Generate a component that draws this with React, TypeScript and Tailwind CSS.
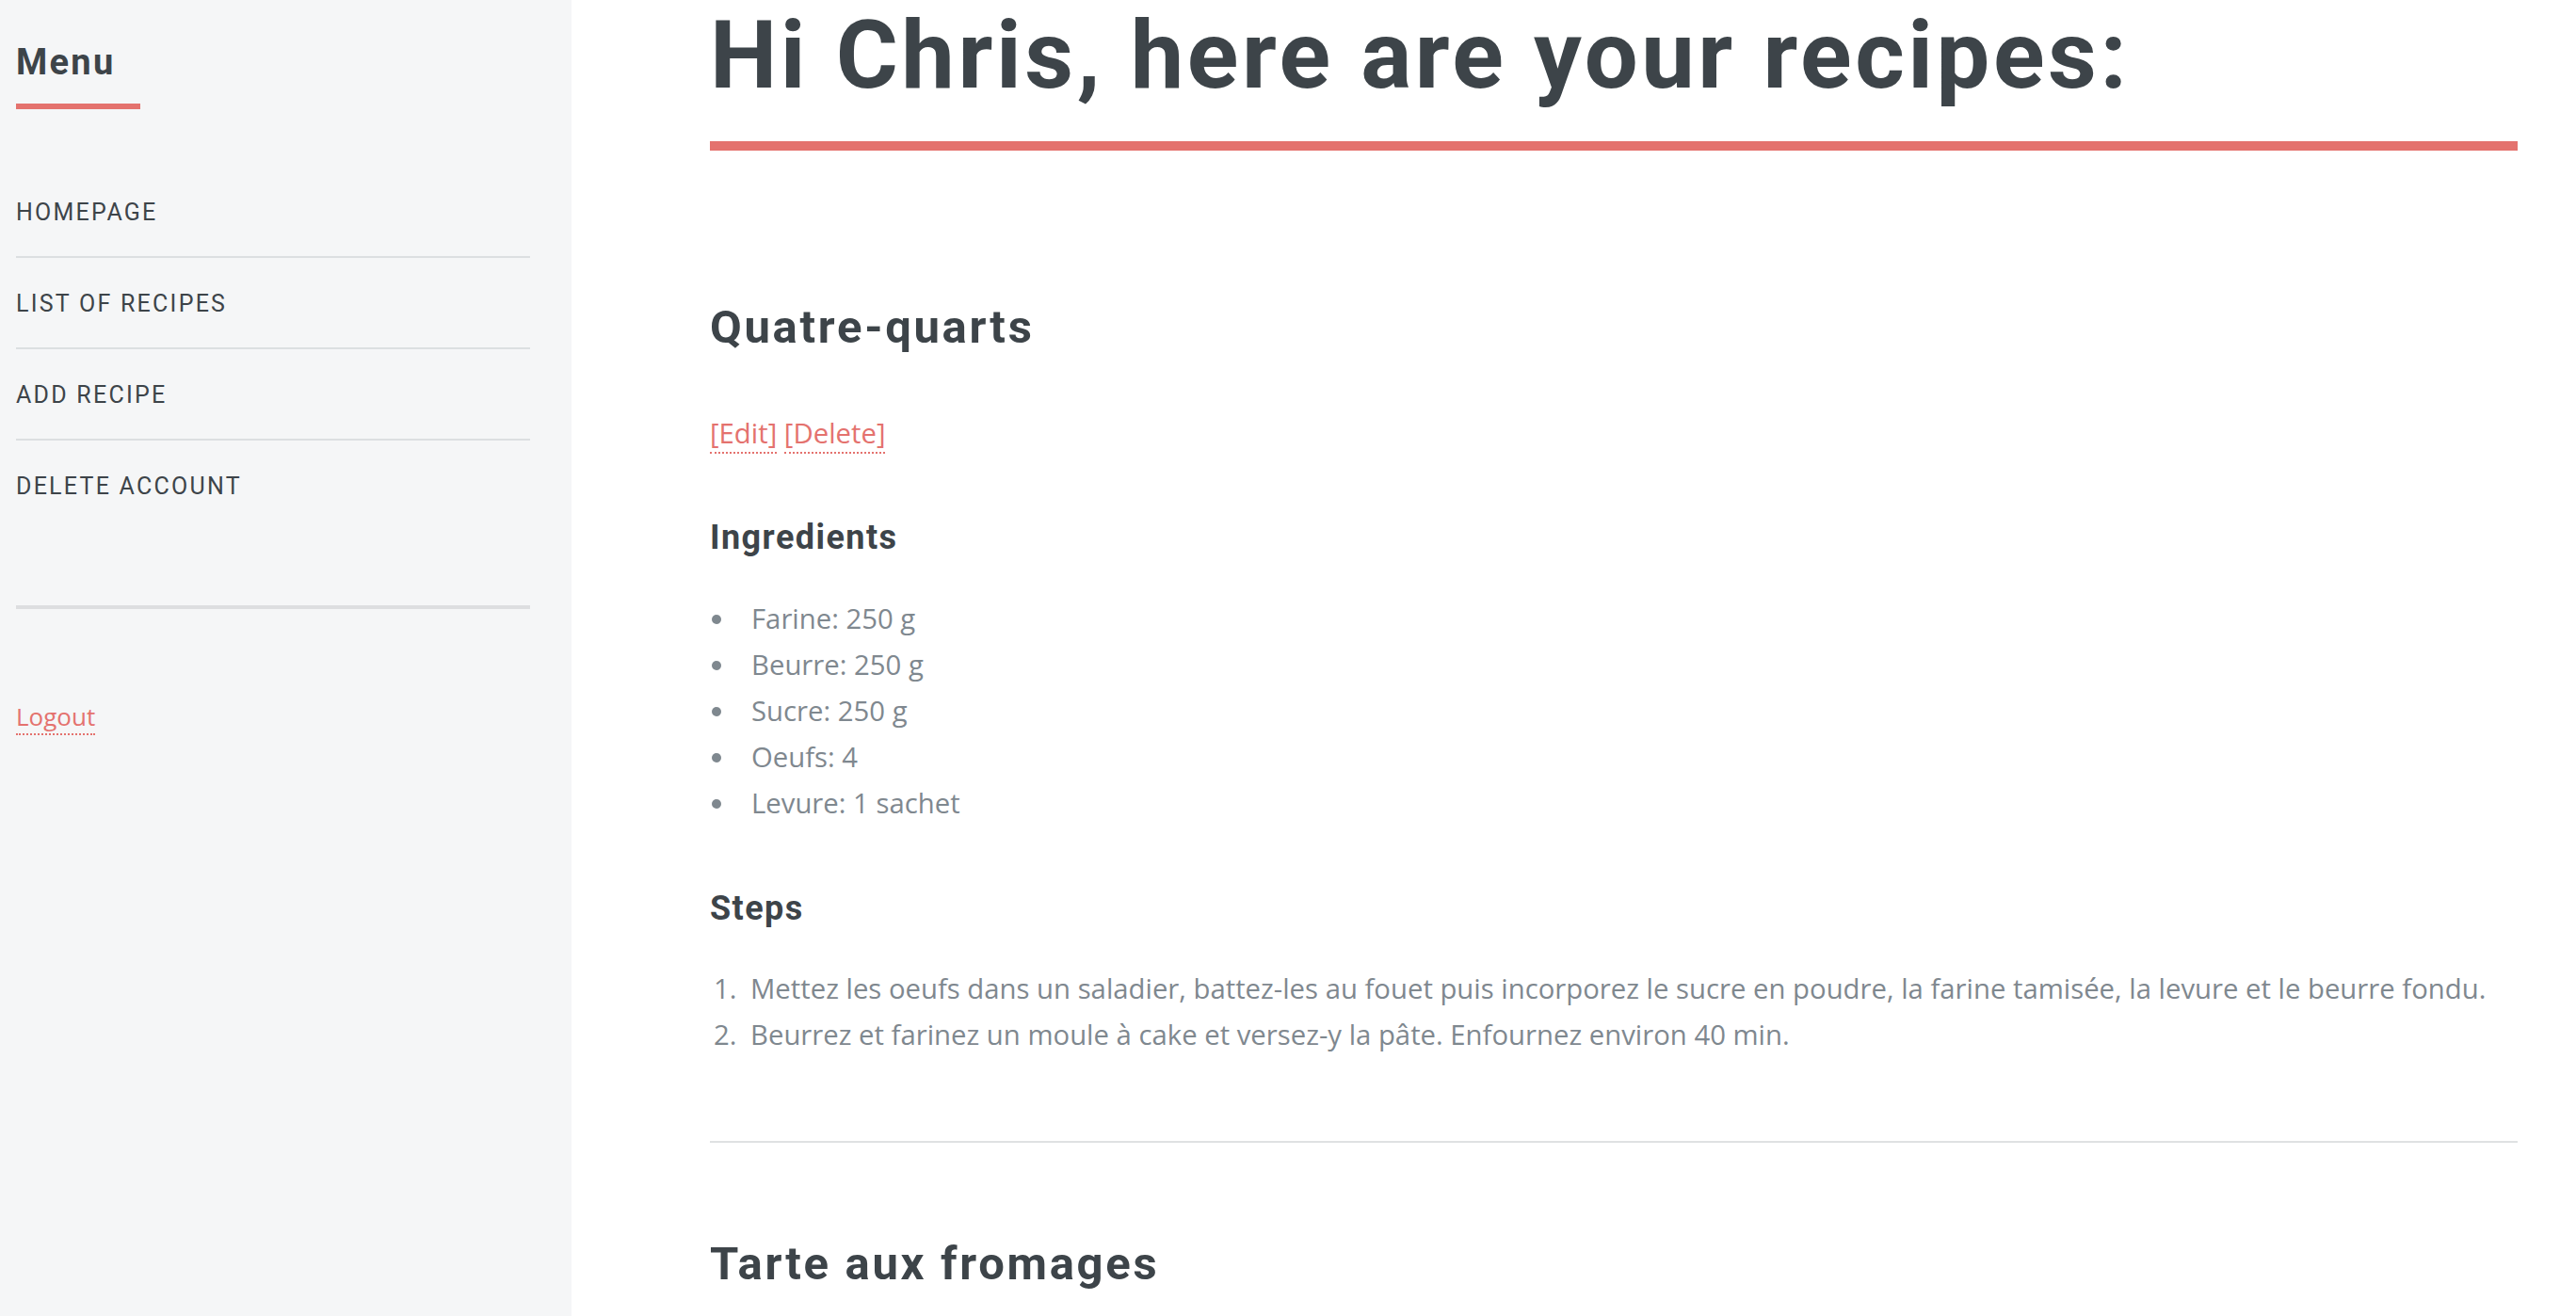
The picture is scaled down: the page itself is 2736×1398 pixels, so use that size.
const menuItems = ["Homepage", "List of recipes", "Add recipe", "Delete account"]

const ingredients = ["Farine: 250 g", "Beurre: 250 g", "Sucre: 250 g", "Oeufs: 4", "Levure: 1 sachet"]

const steps = [
  "Mettez les oeufs dans un saladier, battez-les au fouet puis incorporez le sucre en poudre, la farine tamisée, la levure et le beurre fondu.",
  "Beurrez et farinez un moule à cake et versez-y la pâte. Enfournez environ 40 min.",
]

const heading = "font-['Roboto_Slab',Roboto,sans-serif] font-bold text-[#3d4449]"

const Sidebar = () => {
  return (
    <aside className="w-[607px] shrink-0 bg-[#f5f6f7] pl-[17px] pr-[44px] font-['Open_Sans',sans-serif]">
      <header className="pt-[43px]">
        <h2 className={`${heading} inline-block w-[132px] border-b-[6px] border-[#e4726e] pb-[21px] text-[38px] leading-[46px] tracking-[0.06em]`}>
          Menu
        </h2>
      </header>
      <nav className="mt-[77px] border-b-4 border-[#dddee0] pb-[96px]">
        <ul>
          {menuItems.map((item, i) => (
            <li key={item} className={i > 0 ? "mt-[16px] border-t-2 border-[#dcdfe1] pt-[16px]" : ""}>
              <a
                href="#"
                className="block pt-[3px] font-['Roboto_Slab',Roboto,sans-serif] text-[25px] leading-[60px] uppercase tracking-[0.09em] text-[#3d4449]"
              >
                {item}
              </a>
            </li>
          ))}
        </ul>
      </nav>
      <p className="mt-[93px] text-[26px] leading-[43px]">
        <a href="#" className="border-b-2 border-dotted border-[#e4726e] text-[#e4726e]">
          Logout
        </a>
      </p>
    </aside>
  )
}

const App = () => {
  return (
    <div className="flex h-[1398px] overflow-hidden bg-white">
      <Sidebar />
      <main className="flex-1 pl-[147px] pr-[62px] font-['Open_Sans',sans-serif] text-[29.3px] leading-[49px] text-[#7f888f]">
        <h1 className={`${heading} border-b-[10px] border-[#e4726e] pb-[32px] text-[101px] leading-[118px] tracking-[0.035em]`}>
          Hi Chris, here are your recipes:
        </h1>

        <h2 className={`${heading} mt-[158px] text-[49px] leading-[60px] tracking-[0.055em]`}>Quatre-quarts</h2>
        <p className="mt-[58px]">
          <a href="#" className="border-b-2 border-dotted border-[#e4726e] text-[#e4726e]">
            [Edit]
          </a>{" "}
          <a href="#" className="border-b-2 border-dotted border-[#e4726e] text-[#e4726e]">
            [Delete]
          </a>
        </p>

        <h3 className={`${heading} mt-[64px] text-[36px] leading-[44px] tracking-[0.04em]`}>Ingredients</h3>
        <ul className="mt-[40px] list-disc pl-[29px]">
          {ingredients.map((item) => (
            <li key={item} className="pl-[15px]">
              {item}
            </li>
          ))}
        </ul>

        <h3 className={`${heading} mt-[65px] text-[36px] leading-[44px] tracking-[0.04em]`}>Steps</h3>
        <ol className="mt-[39px] list-decimal pl-[36px]">
          {steps.map((step) => (
            <li key={step} className="pl-[7px]">
              {step}
            </li>
          ))}
        </ol>

        <hr className="mt-[88px] border-t-2 border-[#dfe1e2]" />

        <h2 className={`${heading} mt-[99px] text-[49px] leading-[60px] tracking-[0.055em]`}>Tarte aux fromages</h2>
      </main>
    </div>
  )
}

export default App
